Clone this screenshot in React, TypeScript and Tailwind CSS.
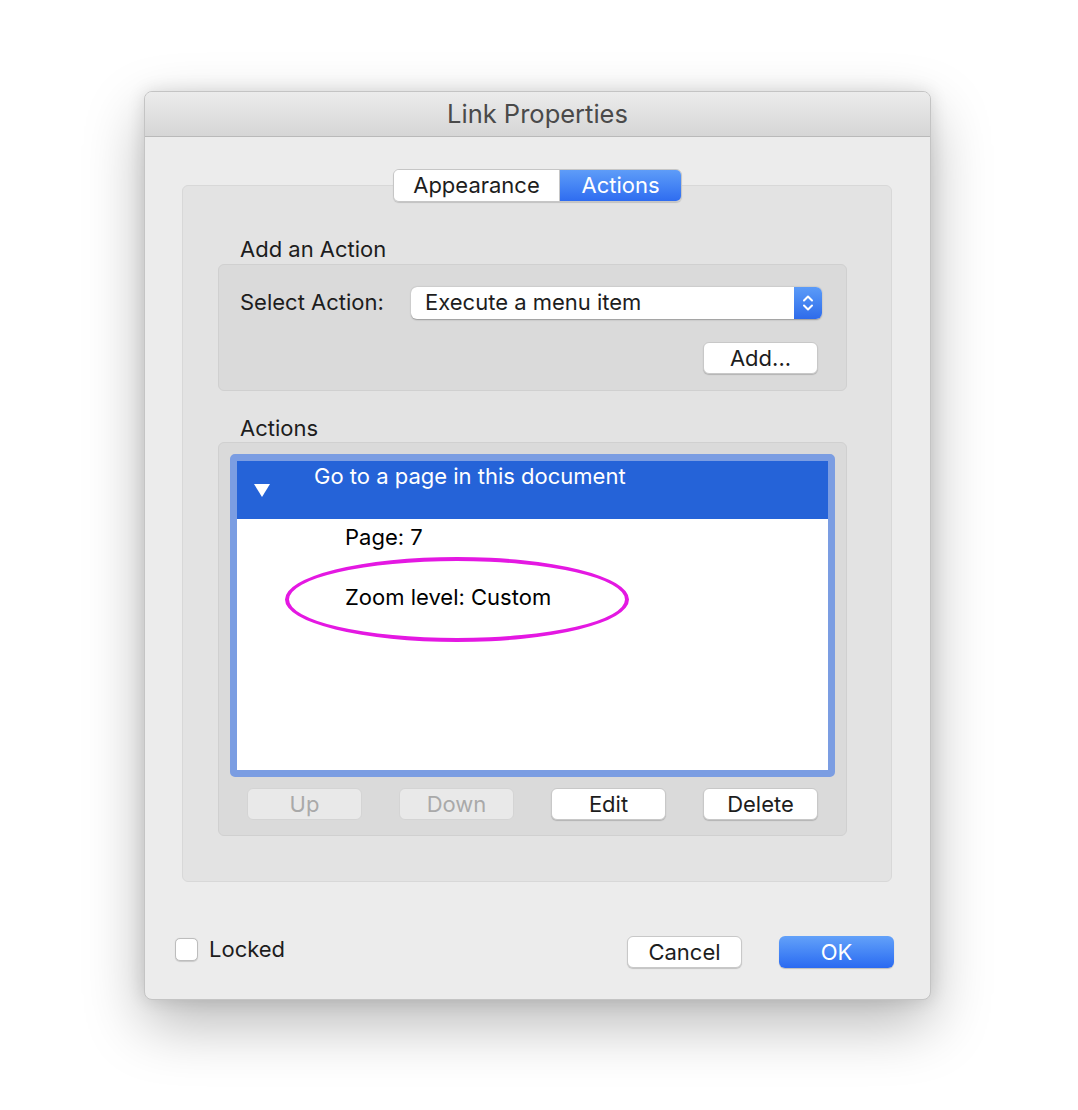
import React from "react";

const FONT = { fontFamily: "Inter, 'Liberation Sans', sans-serif" };

const MacButton = ({ label, disabled = false }: { label: string; disabled?: boolean }) => (
  <button
    className={`w-[115px] h-[32px] rounded-[6px] text-[22px] leading-none flex items-center justify-center border
      ${disabled
        ? "bg-[#e9e9e9] border-[#d4d4d4] text-[#a9a9a9]"
        : "bg-white border-[#c8c8c8] text-[#1d1d1d] shadow-[0_1px_1px_rgba(0,0,0,0.18)]"}`}
  >
    {label}
  </button>
);

const StepperIcon = () => (
  <div className="w-[28px] h-[32px] rounded-r-[6px] bg-gradient-to-b from-[#5b9bf8] to-[#2f6bea] flex items-center justify-center">
    <svg width="12" height="20" viewBox="0 0 12 20" fill="none" stroke="white" strokeWidth="2" strokeLinecap="round" strokeLinejoin="round">
      <path d="M2 7.5 L6 3.5 L10 7.5" />
      <path d="M2 12.5 L6 16.5 L10 12.5" />
    </svg>
  </div>
);

export default function App() {
  return (
    <div className="min-h-screen bg-white pt-[91px] pl-[144px]" style={FONT}>
      {/* window */}
      <div className="w-[787px] h-[909px] rounded-[8px] bg-[#ececec] border border-[#c4c4c4] shadow-[0_24px_60px_rgba(0,0,0,0.28),0_0_18px_rgba(0,0,0,0.12)] overflow-hidden flex flex-col">
        {/* title bar */}
        <div className="h-[45px] shrink-0 bg-gradient-to-b from-[#ececec] to-[#d6d6d6] border-b border-[#b9b9b9] flex items-center justify-center">
          <span className="text-[25.5px] text-[#4a4a4a] leading-none">Link Properties</span>
        </div>

        <div className="flex-1 flex flex-col px-[37px]">
          {/* tabs */}
          <div className="flex justify-center mt-[32px] relative z-10">
            <div className="flex h-[33px] rounded-[6px] border border-[#c6c6c6] shadow-[0_1px_1px_rgba(0,0,0,0.15)] overflow-hidden text-[22px]">
              <div className="w-[166px] bg-white text-[#1d1d1d] flex items-center justify-center border-r border-[#c6c6c6]">Appearance</div>
              <div className="w-[121px] bg-gradient-to-b from-[#5e9cf8] to-[#2f6cf0] text-white flex items-center justify-center">Actions</div>
            </div>
          </div>

          {/* tab box */}
          <div className="-mt-[17px] h-[697px] w-[710px] rounded-[6px] bg-[#e3e3e3] border border-[#d8d8d8] flex flex-col pl-[35px] pt-[51px]">
            <div className="pl-[22px] text-[22px] text-[#1d1d1d] leading-[24px]">Add an Action</div>
            <div className="mt-[3px] w-[629px] h-[127px] rounded-[6px] bg-[#dadada] border border-[#d0d0d0] flex flex-col">
              <div className="flex items-center mt-[21px] pl-[21px]">
                <span className="text-[22px] text-[#1d1d1d] w-[171px]">Select Action:</span>
                <div className="flex h-[32px] w-[411px] rounded-[6px] bg-white shadow-[0_0.5px_1.5px_rgba(0,0,0,0.3)]">
                  <span className="flex-1 pl-[14px] text-[22px] text-[#1d1d1d] flex items-center">Execute a menu item</span>
                  <StepperIcon />
                </div>
              </div>
              <div className="flex justify-end pr-[28px] mt-[23px]">
                <MacButton label="Add..." />
              </div>
            </div>

            <div className="mt-[25px] pl-[22px] text-[22px] text-[#1d1d1d] leading-[24px]">Actions</div>
            <div className="mt-[2px] w-[629px] h-[394px] rounded-[6px] bg-[#dadada] border border-[#d0d0d0] flex flex-col px-[11px] pt-[11px]">
              {/* list with focus ring */}
              <div className="h-[323px] rounded-[5px] border-[7px] border-[#7b9de2] bg-white flex flex-col relative">
                <div className="h-[58px] bg-[#2563d8] flex text-white text-[22px]">
                  <div className="w-[50px] flex items-center justify-center">
                    <svg width="18" height="15" viewBox="0 0 18 15">
                      <polygon points="1,1 17,1 9,14" fill="white" />
                    </svg>
                  </div>
                  <span className="ml-[27px] pt-[1px] leading-[28px]">Go to a page in this document</span>
                </div>
                <div className="pl-[108px] pt-[6px] text-[22px] text-black leading-[24px]">Page: 7</div>
                <div className="pl-[108px] pt-[36px] text-[22px] text-black leading-[24px]">Zoom level: Custom</div>

                {/* annotation */}
                <div className="absolute left-[48px] top-[96px] w-[344px] h-[85px] rounded-[50%] border-[4px] border-[#e418e2]" />
              </div>

              <div className="flex justify-between px-[17px] mt-[11px]">
                <MacButton label="Up" disabled />
                <MacButton label="Down" disabled />
                <MacButton label="Edit" />
                <MacButton label="Delete" />
              </div>
            </div>
          </div>

          {/* footer */}
          <div className="flex items-center mt-[48px] -ml-[7px]">
            <div className="w-[23px] h-[23px] rounded-[5px] bg-white border border-[#bdbdbd] shadow-[0_0.5px_1px_rgba(0,0,0,0.15)]" />
            <span className="ml-[11px] text-[22px] text-[#1d1d1d]">Locked</span>
            <div className="flex-1" />
            <div className="flex gap-[37px] mt-[6px] -mr-[1px]">
              <MacButton label="Cancel" />
              <button className="w-[115px] h-[32px] rounded-[6px] text-[22px] text-white bg-gradient-to-b from-[#63a1f9] to-[#2a69f1] shadow-[0_1px_1px_rgba(0,0,0,0.2)] flex items-center justify-center">
                OK
              </button>
            </div>
          </div>
        </div>
      </div>
    </div>
  );
}
